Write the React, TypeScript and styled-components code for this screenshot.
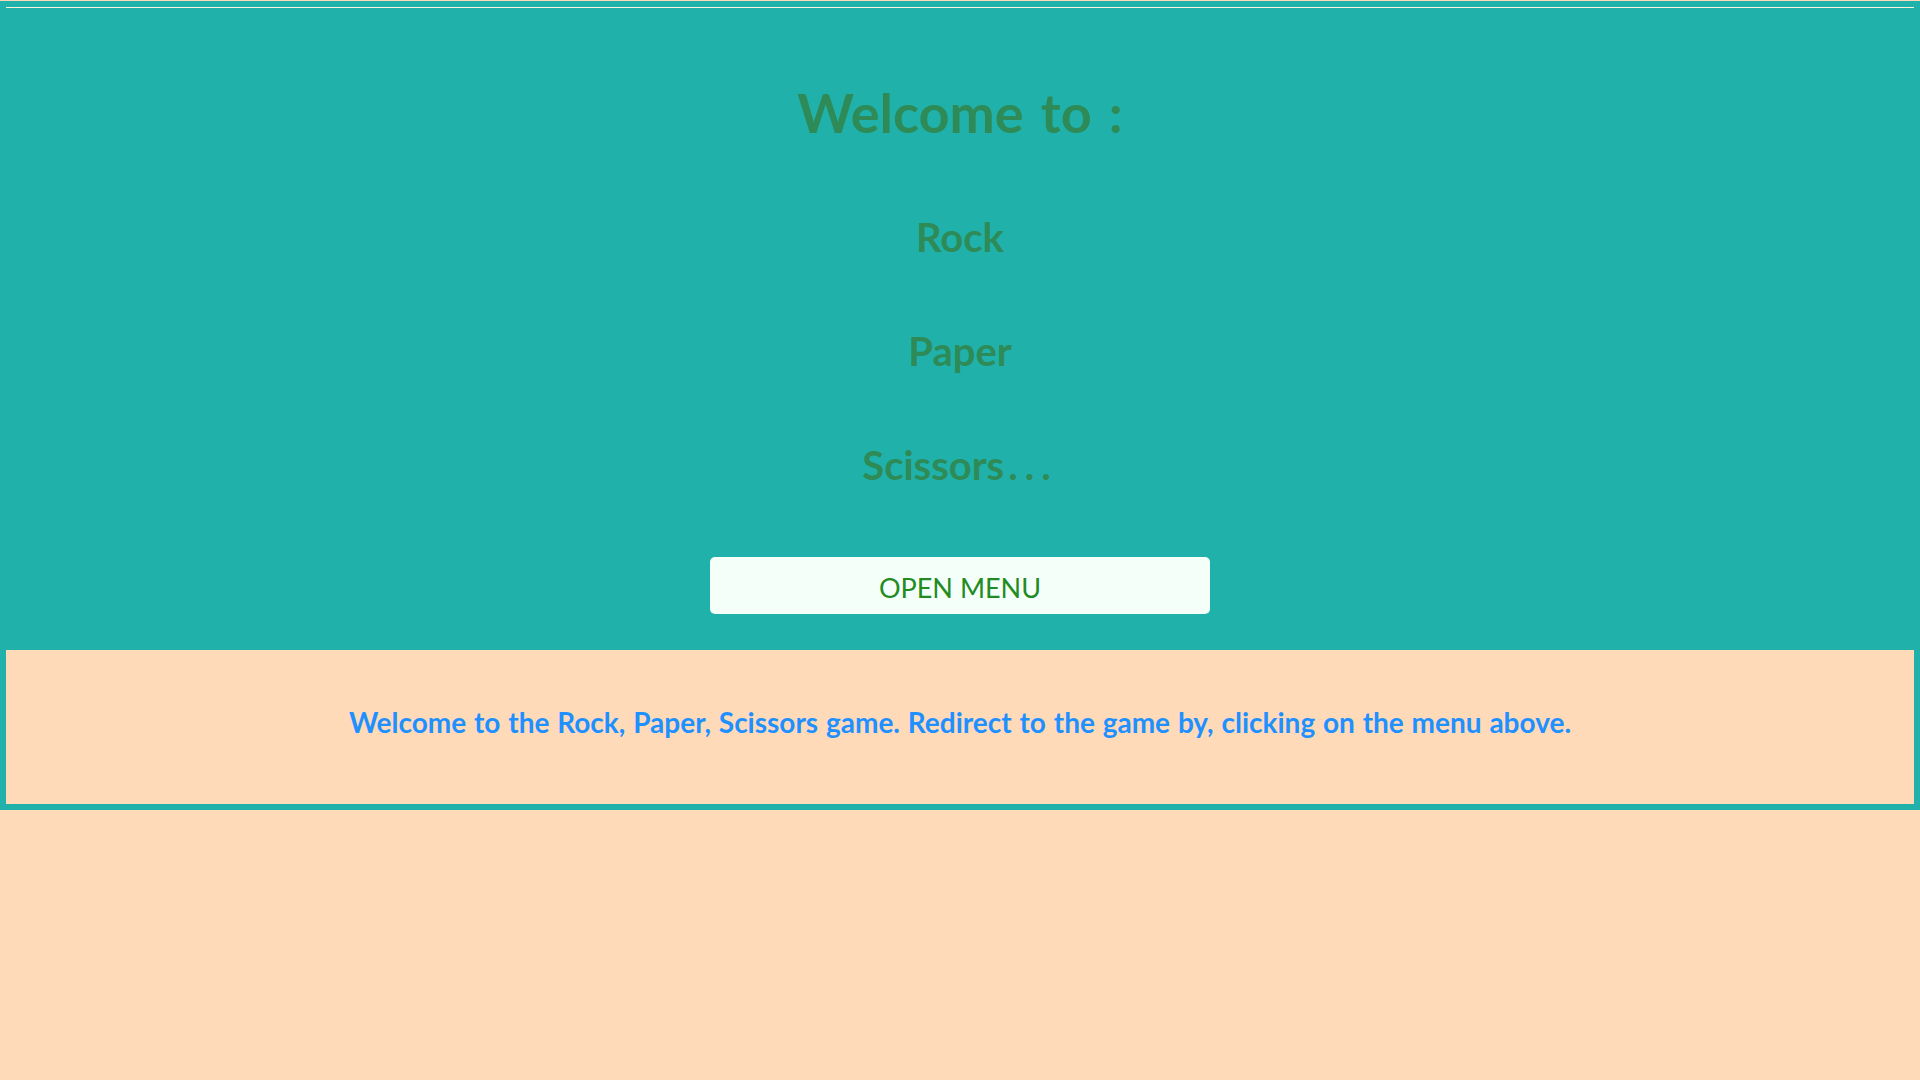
import React from "react";
import styled, { createGlobalStyle } from "styled-components";

const GlobalStyle = createGlobalStyle`
  html, body {
    margin: 0;
    padding: 0;
    background: #ffdab9;
  }
  body {
    padding-top: 1px;
    font-family: Lato, "Open Sans", sans-serif;
  }
`;

const Main = styled.main`
  background: #20b2aa;
  padding: 6px 6px 6px;
  display: flex;
  flex-direction: column;
`;

const Rule = styled.hr`
  margin: 0;
  border: 0;
  border-top: 1px solid #fff3dc;
  height: 0;
`;

const Hero = styled.section`
  display: flex;
  flex-direction: column;
  align-items: center;
  padding-top: 75px;
  text-align: center;
`;

const Title = styled.h1`
  margin: 0 0 37px;
  font-family: Lato, sans-serif;
  font-weight: 700;
  font-size: 54px;
  line-height: 60px;
  word-spacing: 4px;
  color: #2e8b57;
`;

const Word = styled.h2`
  margin: 0;
  font-family: Lato, sans-serif;
  font-weight: 700;
  font-size: 40px;
  line-height: 114px;
  color: #2e8b57;
`;

const Dots = styled.span`
  letter-spacing: 7px;
  margin-left: 4px;
`;

const MenuButton = styled.button`
  margin-top: 35px;
  width: 500px;
  height: 57px;
  padding: 4px 0 0;
  border: 0;
  border-radius: 5px;
  background: #f5fffa;
  color: #228b22;
  font-family: Lato, sans-serif;
  font-size: 27px;
  font-weight: 400;
  cursor: pointer;
`;

const Footer = styled.footer`
  margin-top: 36px;
  height: 154px;
  box-sizing: border-box;
  padding-top: 55px;
  background: #ffdab9;
  text-align: center;
`;

const FooterText = styled.p`
  margin: 0;
  font-family: Lato, sans-serif;
  font-weight: 700;
  font-size: 28px;
  line-height: 34px;
  word-spacing: 1px;
  color: #1e90ff;
`;

export default function App() {
  return (
    <>
      <GlobalStyle />
      <Main>
        <Rule />
        <Hero>
          <Title>Welcome to :</Title>
          <Word>Rock</Word>
          <Word>Paper</Word>
          <Word>
            Scissors<Dots>...</Dots>
          </Word>
          <MenuButton>OPEN MENU</MenuButton>
        </Hero>
        <Footer>
          <FooterText>
            Welcome to the Rock, Paper, Scissors game. Redirect to the game by, clicking on the menu above.
          </FooterText>
        </Footer>
      </Main>
    </>
  );
}
